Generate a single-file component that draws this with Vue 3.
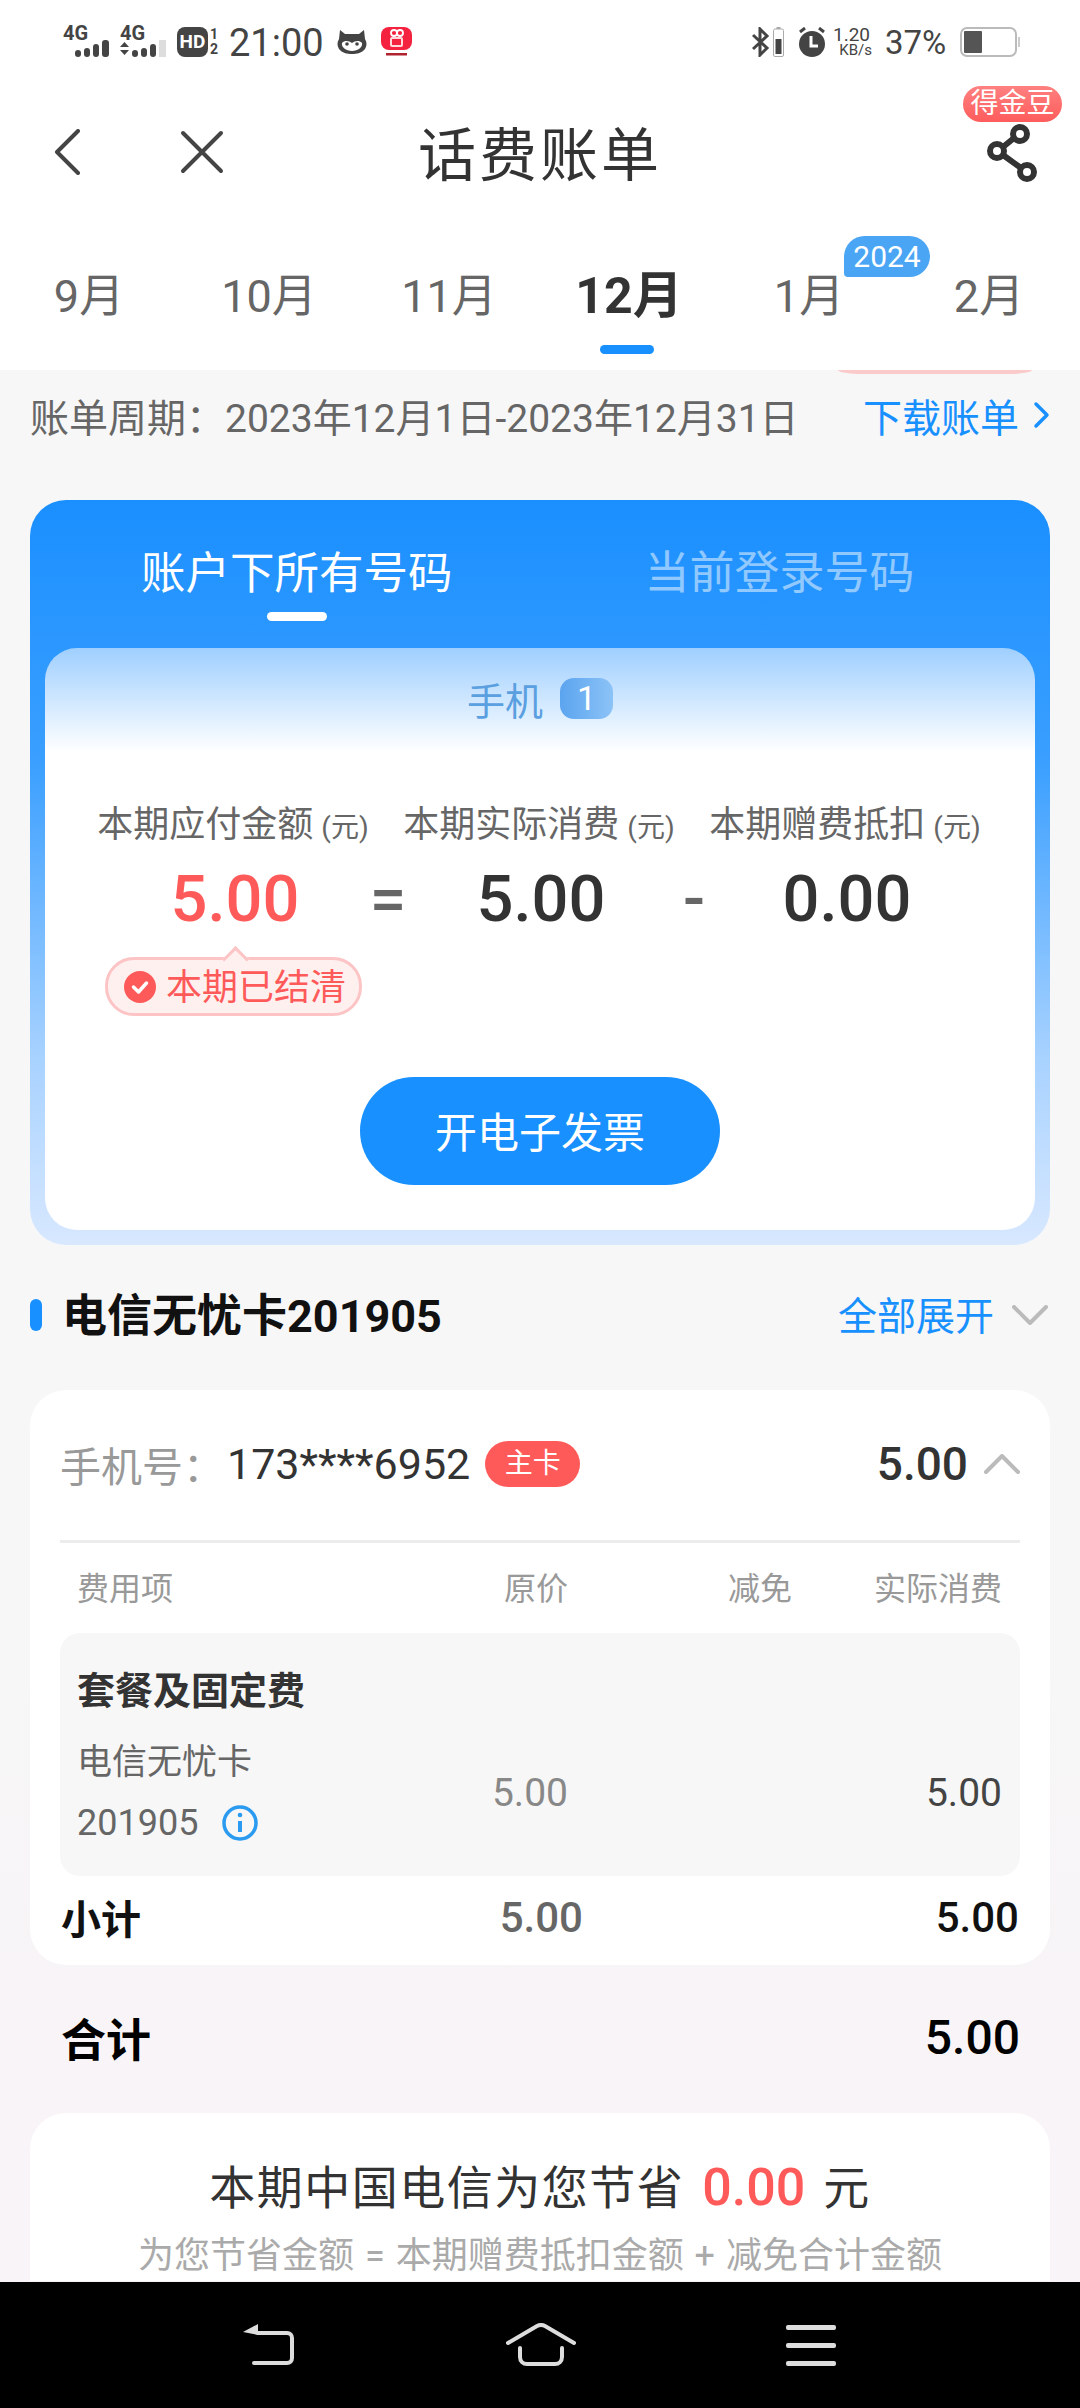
<template>
  <div class="page">
    <header class="top">
      <div class="status">
        <div class="sig">
          <span>4G</span>
          <svg width="47" height="17" viewBox="0 0 47 17" fill="#444"><rect x="12" y="10" width="6" height="7" rx="3" /><rect x="21" y="8" width="6" height="9" rx="3" /><rect x="30" y="4" width="6" height="13" rx="3" /><rect x="39" y="0" width="7" height="17" rx="3" /></svg>
        </div>
        <div class="sig">
          <span>4G</span>
          <svg width="47" height="17" viewBox="0 0 47 17" fill="#444"><path d="M0 7 4.500 2 9 7zM0 10h9l-4.500 5z" /><rect x="12" y="10" width="6" height="7" rx="3" /><rect x="21" y="8" width="6" height="9" rx="3" /><rect x="30" y="4" width="6" height="13" rx="3" /><rect x="39" y="0" width="7" height="17" fill="#ddd" /></svg>
        </div>
        <div class="hd"><b>HD</b><i><em>1</em><em>2</em></i></div>
        <span class="clock">21:00</span>
        <svg class="cat" width="30" height="24" viewBox="0 0 30 24"><path d="M3 0 8 4h14l5-4 1 9c2 3 2 7 0 10-3 4-8 5-13 5S5 23 2 19C0 16 0 12 2 9z" fill="#444" /><path d="M5 13c3-3 7-2 10 0 3-2 7-3 10 0 1 4-4 8-10 8S4 17 5 13z" fill="#fff" /><circle cx="10" cy="14" r="1.800" fill="#444" /><circle cx="20" cy="14" r="1.800" fill="#444" /></svg>
        <svg class="kw" width="31" height="30" viewBox="0 0 31 30"><rect x="0" y="0" width="31" height="23" rx="8" fill="#f5223f" /><circle cx="13" cy="6" r="3" fill="none" stroke="#fff" stroke-width="1.800" /><circle cx="19" cy="6" r="3" fill="none" stroke="#fff" stroke-width="1.800" /><rect x="10" y="11" width="11" height="8" rx="1" fill="none" stroke="#ffd9dc" stroke-width="2" /><rect x="5" y="26" width="21" height="2.500" fill="#b0222e" /></svg>
        <div class="status-right">
          <svg width="18" height="30" viewBox="0 0 18 30" fill="none" stroke="#444" stroke-width="3"><path d="M1 8 15 21 8 28V2l7 7L1 22" /></svg>
          <svg class="mini" width="11" height="30" viewBox="0 0 11 30"><rect x="3.500" y="0" width="4" height="2" fill="#aaa" /><rect x=".5" y="2" width="10" height="27.500" rx="1.500" fill="#fff" stroke="#aaa" /><rect x="2.500" y="12" width="6" height="15" fill="#444" /></svg>
          <svg class="alarm" width="28" height="30" viewBox="0 0 28 30"><circle cx="14" cy="17" r="13" fill="#444" /><path d="M13 9v10h7" fill="none" stroke="#fff" stroke-width="3" /><path d="M2 5 7 1M26 5l-5-4" stroke="#444" stroke-width="3" /></svg>
          <div class="speed"><span>1.20</span><span>KB/s</span></div>
          <span class="pct">37%</span>
          <svg class="batt" width="60" height="30" viewBox="0 0 60 30"><rect x="1" y="1" width="55" height="28" rx="6" fill="#fff" stroke="#bbb" stroke-width="2" /><rect x="4" y="4" width="18" height="22" rx="1" fill="#555" /><rect x="58" y="10" width="2" height="10" fill="#ccc" /></svg>
        </div>
      </div>

      <div class="navbar">
        <svg class="nav-back" width="26" height="46" viewBox="0 0 26 46" fill="none" stroke="#444" stroke-width="4" stroke-linecap="round" stroke-linejoin="round"><path d="M24 2 3 23l21 21" /></svg>
        <svg class="nav-close" width="44" height="44" viewBox="0 0 44 44" fill="none" stroke="#444" stroke-width="4" stroke-linecap="round"><path d="M3 3l38 38M41 3 3 41" /></svg>
        <h1>话费账单</h1>
        <span class="bean">得金豆</span>
        <svg class="share" width="52" height="58" viewBox="0 0 52 58" fill="none" stroke="#333" stroke-width="6"><circle cx="33" cy="10" r="7" /><circle cx="10" cy="27" r="7" /><circle cx="40" cy="48" r="7" /><path d="M27 14 16 23M16 31l18 13" /></svg>
      </div>

      <div class="months">
        <div v-for="m in months" :key="m.label" class="month" :class="{ on: m.active }">
          {{ m.label }}
          <span v-if="m.year" class="year">{{ m.year }}</span>
          <span v-if="m.active" class="bar" />
        </div>
      </div>
    </header>

    <main class="body">
      <span class="peek" />
      <div class="period">
        <span class="period-text">账单周期：2023年12月1日-2023年12月31日</span>
        <span class="dl">下载账单
          <svg width="17" height="30" viewBox="0 0 17 30" fill="none" stroke="#1890ff" stroke-width="3.500" stroke-linecap="round" stroke-linejoin="round"><path d="M3 4 14 15 3 26" /></svg>
        </span>
      </div>

      <section class="blue">
        <div class="tabs">
          <div class="tab on">账户下所有号码<span class="tab-bar" /></div>
          <div class="tab off">当前登录号码</div>
        </div>
        <div class="inner">
          <div class="kind"><span>手机</span><b>1</b></div>
          <div class="labels">
            <span v-for="l in labels" :key="l">{{ l }}<small>(元)</small></span>
          </div>
          <div class="nums">
            <span class="red">5.00</span><i>=</i><span>5.00</span><i>-</i><span>0.00</span>
          </div>
          <div class="paid">
            <svg width="32" height="32" viewBox="0 0 32 32"><circle cx="16" cy="16" r="16" fill="#ff5a5a" /><path d="M9.500 16l5 5 8-9" fill="none" stroke="#fff" stroke-width="3.500" stroke-linecap="round" stroke-linejoin="round" /></svg>
            <span>本期已结清</span>
          </div>
          <button class="invoice" type="button">开电子发票</button>
        </div>
      </section>

      <div class="sec-head">
        <span class="sec-mark" />
        <h2>电信无忧卡201905</h2>
        <span class="expand">全部展开</span>
        <svg width="36" height="20" viewBox="0 0 36 20" fill="none" stroke="#bbb" stroke-width="4" stroke-linecap="round" stroke-linejoin="round"><path d="M2 2l16 16L34 2" /></svg>
      </div>

      <section class="card">
        <div class="phone">
          <span class="ph-label">手机号：</span>
          <span class="ph-num">173****6952</span>
          <span class="main-tag">主卡</span>
          <b class="ph-total">5.00</b>
          <svg width="36" height="20" viewBox="0 0 36 20" fill="none" stroke="#bbb" stroke-width="4" stroke-linecap="round" stroke-linejoin="round"><path d="M2 18 18 2l16 16" /></svg>
        </div>
        <div class="cols">
          <span>费用项</span><span>原价</span><span>减免</span><span>实际消费</span>
        </div>
        <div class="fee">
          <h3>套餐及固定费</h3>
          <div class="fee-row">
            <div class="fee-name">
              <p>电信无忧卡</p>
              <p class="plan-no">201905
                <svg width="36" height="36" viewBox="0 0 36 36" fill="none" stroke="#2a9bf0"><circle cx="18" cy="18" r="16" stroke-width="3.500" /><path d="M18 16v11" stroke-width="4" /><circle cx="18" cy="10" r="2.300" fill="#2a9bf0" stroke="none" /></svg>
              </p>
            </div>
            <span class="orig">5.00</span>
            <span />
            <span class="real">5.00</span>
          </div>
        </div>
        <div class="subtotal">
          <b>小计</b><b class="sub-mid">5.00</b><b class="sub-end">5.00</b>
        </div>
      </section>

      <div class="total"><b>合计</b><span>5.00</span></div>

      <section class="save">
        <p class="save-title">本期中国电信为您节省<em>0.00</em>元</p>
        <p class="save-sub">为您节省金额 = 本期赠费抵扣金额 + 减免合计金额</p>
      </section>
    </main>

    <footer class="sysnav">
      <svg width="52" height="42" viewBox="0 0 52 42" fill="none" stroke="#ddd" stroke-width="4" stroke-linecap="round"><path d="M15 9h29c3 0 5 2 5 5v20c0 3-2 5-5 5H11" /><path d="M0 8 15 0v11z" fill="#ddd" stroke="none" /></svg>
      <svg width="70" height="44" viewBox="0 0 70 44" fill="none" stroke="#ddd" stroke-width="4" stroke-linecap="round"><path d="M2 20 31 3q4-2 8 0L68 20" /><path d="M14 25v9c0 4 3 7 7 7h28c4 0 7-3 7-7v-9" /></svg>
      <div class="menu"><span /><span /><span /></div>
    </footer>
  </div>
</template>

<script setup>
const months = [
  { label: '9月' },
  { label: '10月' },
  { label: '11月' },
  { label: '12月', active: true },
  { label: '1月', year: '2024' },
  { label: '2月' },
]
const labels = ['本期应付金额', '本期实际消费', '本期赠费抵扣']
</script>

<style>
html, body { margin: 0; background: #f7f7f7; }
</style>

<style scoped>
.page {
  width: 1080px;
  height: 2408px;
  display: flex;
  flex-direction: column;
  overflow: hidden;
  font-family: Roboto, "Noto Sans CJK SC", sans-serif;
  color: #333;
}
p, h1, h2, h3 { margin: 0; font-weight: 400; }

.top { background: #fff; flex-shrink: 0; }
.status { height: 84px; display: flex; align-items: center; padding: 0 60px 0 63px; color: #444; }
.sig { width: 47px; margin-right: 10px; display: flex; flex-direction: column; margin-top: -1px; }
.sig span { font: 700 20px/14px Roboto, sans-serif; }
.sig svg { display: block; }
.hd { display: flex; align-items: center; width: 42px; margin-right: 10px; }
.hd b { width: 31px; height: 30px; background: #444; border-radius: 8px; color: #fff; font: 700 19px/30px Roboto, sans-serif; text-align: center; }
.hd i { display: flex; flex-direction: column; font: 700 14px/15px Roboto, sans-serif; margin-left: 2px; }
.hd em { font-style: normal; }
.clock { font-size: 38px; line-height: 40px; width: 95px; margin-top: 2px; }
.cat { margin-left: 13px; }
.kw { margin-left: 14px; }
.status-right { margin-left: auto; display: flex; align-items: center; }
.mini { margin-left: 3px; }
.alarm { margin-left: 14px; }
.speed { width: 38px; margin-left: 8px; display: flex; flex-direction: column; align-items: flex-end; }
.speed span:first-child { font-size: 19px; line-height: 17px; margin-right: 2px; }
.speed span:last-child { font-size: 15px; line-height: 15px; }
.pct { font-size: 33px; line-height: 40px; margin-left: 13px; width: 61px; margin-top: 2px; }
.batt { margin-left: 14px; }

.navbar { height: 138px; position: relative; display: flex; align-items: center; justify-content: center; }
.nav-back { position: absolute; left: 54px; top: 45px; }
.nav-close { position: absolute; left: 180px; top: 46px; }
.navbar h1 { font-size: 58px; line-height: 80px; letter-spacing: 3px; color: #333; margin-top: 6px; }
.bean {
  position: absolute;
  left: 963px;
  top: 2px;
  width: 99px;
  height: 36px;
  border-radius: 18px;
  background: linear-gradient(#ff8080, #ff5c5c);
  color: #fff;
  font-size: 28px;
  line-height: 36px;
  text-align: center;
}
.share { position: absolute; left: 987px; top: 40px; }

.months { height: 148px; display: grid; grid-template-columns: repeat(6, 180px); margin-left: -1px; }
.month { position: relative; display: flex; align-items: center; justify-content: center; font-size: 45px; color: #666; padding-bottom: 7px; box-sizing: border-box; }
.month.on { font-size: 50px; font-weight: 700; color: #333; padding-bottom: 11px; }
.year {
  position: absolute;
  left: 125px;
  top: 14px;
  width: 86px;
  height: 41px;
  border-radius: 21px 21px 21px 4px;
  background: #4aa5f5;
  color: #fff;
  font-size: 30px;
  font-weight: 400;
  line-height: 41px;
  text-align: center;
}
.bar { position: absolute; left: 61px; bottom: 16px; width: 54px; height: 9px; border-radius: 5px; background: #1890ff; }

.body {
  flex: 1;
  min-height: 0;
  overflow: hidden;
  position: relative;
  background: linear-gradient(#f7f7f7 0, #f7f7f7 1300px, #f8f4f7 1650px);
}
.peek { position: absolute; left: 838px; top: 0; width: 194px; height: 4px; border-radius: 0 0 24px 24px / 0 0 4px 4px; background: #fbcaca; }
.period { height: 96px; margin-bottom: 34px; padding: 0 30px 6px; box-sizing: border-box; display: flex; align-items: center; justify-content: space-between; font-size: 39px; }
.period-text { color: #666; }
.dl { color: #1890ff; display: flex; align-items: center; gap: 14px; }

.blue {
  margin: 0 30px;
  padding: 0 15px 15px;
  border-radius: 36px;
  background: linear-gradient(#1a8fff, #3a9fff 35%, #a8d2ff 75%, #d8e8ff);
}
.tabs { height: 148px; display: flex; }
.tab { position: relative; font-size: 44.500px; line-height: 148px; }
.tab.on { color: #fff; margin-left: 96px; }
.tab.off { color: rgba(255, 255, 255, 0.5); margin-left: 192px; font-size: 45px; }
.tab-bar { position: absolute; left: 126px; top: 112px; width: 60px; height: 9px; border-radius: 5px; background: #fff; }

.inner {
  height: 582px;
  box-sizing: border-box;
  border-radius: 32px;
  background: linear-gradient(#9fcfff, #fff 104px);
}
.kind { height: 104px; padding-bottom: 4px; box-sizing: border-box; display: flex; align-items: center; justify-content: center; gap: 17px; color: #5a9fe0; font-size: 38px; }
.kind b { width: 53px; height: 41px; border-radius: 14px; background: linear-gradient(90deg, #5ba4ef, #8cc3f7); color: #fff; font-size: 34px; font-weight: 400; line-height: 41px; text-align: center; }
.labels { margin-top: 48px; height: 50px; padding-left: 35px; display: grid; grid-template-columns: repeat(3, 306px); color: #666; font-size: 36px; line-height: 50px; text-align: center; white-space: nowrap; }
.labels small { font-size: 28px; margin-left: 8px; }
.nums { margin-top: 9px; height: 80px; padding-left: 63px; display: grid; grid-template-columns: 254px 52px 254px 52px 254px; font-size: 65px; font-weight: 500; line-height: 80px; text-align: center; }
.nums i { font-style: normal; color: #666; }
.nums .red { color: #ff5a5a; }
.paid {
  position: relative;
  margin: 18px 0 0 60px;
  width: 257px;
  height: 59px;
  box-sizing: border-box;
  border: 3px solid #fcc4c4;
  border-radius: 29px;
  background: #fff0f0;
  color: #ff5a5a;
  font-size: 36px;
  display: flex;
  align-items: center;
  padding-left: 16px;
  gap: 10px;
}
.paid span { margin-top: -5px; }
.paid::before {
  content: "";
  position: absolute;
  left: 118px;
  top: -10px;
  width: 16px;
  height: 16px;
  border: solid #fcc4c4;
  border-width: 3px 0 0 3px;
  background: #fff0f0;
  transform: rotate(45deg);
}
.invoice { display: block; margin: 61px auto 0; width: 360px; height: 108px; padding-bottom: 4px; border: 0; border-radius: 54px; background: #1890ff; color: #fff; font: inherit; font-size: 42px; }

.sec-head { height: 140px; margin-bottom: 5px; padding: 0 32px 5px 30px; box-sizing: border-box; display: flex; align-items: center; }
.sec-mark { width: 12px; height: 32px; margin-top: 5px; border-radius: 6px; background: #1890ff; margin-right: 20px; }
.sec-head h2 { font-size: 45px; font-weight: 700; color: #111; flex: 1; }
.expand { color: #1890ff; font-size: 39px; margin-right: 18px; }
.sec-head svg { margin-top: 5px; }

.card { margin: 0 30px; height: 575px; box-sizing: border-box; border-radius: 36px; background: #fff; padding: 0 30px; }
.phone { height: 148px; padding-bottom: 2px; display: flex; align-items: center; border-bottom: 3px solid #ececec; box-sizing: content-box; }
.ph-label { color: #999; font-size: 41px; width: 167px; }
.ph-num { font-size: 43px; color: #333; }
.main-tag { margin-left: 15px; width: 95px; height: 46px; border-radius: 23px; background: #ff5a5a; color: #fff; font-size: 28px; line-height: 46px; text-align: center; }
.ph-total { margin-left: auto; margin-right: 16px; font-size: 46px; font-weight: 500; }
.cols { height: 90px; padding: 0 18px 5px 17px; box-sizing: border-box; display: grid; grid-template-columns: 201px 290px 224px 210px; align-items: center; color: #999; font-size: 32px; }
.cols span:not(:first-child) { text-align: right; }
.fee { height: 243px; box-sizing: border-box; padding: 28px 18px 0 17px; border-radius: 20px; background: #f7f7f7; }
.fee h3 { font-size: 38px; font-weight: 700; line-height: 60px; color: #333; }
.fee-row { margin-top: 12px; display: grid; grid-template-columns: 201px 290px 224px 210px; align-items: center; }
.fee-name p { display: flex; align-items: center; gap: 24px; font-size: 35px; line-height: 60px; color: #666; white-space: nowrap; }
.fee-name .plan-no { font-size: 36px; }
.orig, .real { text-align: right; font-size: 39px; }
.orig { color: #888; }
.real { color: #444; }
.subtotal { height: 86px; padding-bottom: 4px; box-sizing: border-box; display: grid; grid-template-columns: 120px 402px 438px; align-items: center; font-size: 40px; color: #111; margin-left: 1px; margin-right: -1px; }
.sub-mid { text-align: right; font-weight: 500; font-size: 42px; color: #666; }
.sub-end { text-align: right; font-weight: 500; font-size: 42px; padding-right: 2px; }

.total { height: 144px; margin-bottom: 4px; padding: 0 60px 0 61px; display: flex; align-items: center; justify-content: space-between; font-size: 45px; color: #000; }
.total span { font-size: 48px; font-weight: 500; }

.save { margin: 0 30px; padding-top: 40px; border-radius: 36px 36px 0 0; background: #fff; text-align: center; }
.save-title { line-height: 70px; font-size: 46px; letter-spacing: 1.500px; color: #333; display: flex; justify-content: center; align-items: center; }
.save-title em { font-style: normal; font-weight: 500; font-size: 52px; letter-spacing: 0; color: #ff5a5a; margin: 0 18px; }
.save-sub { margin-top: 8px; line-height: 50px; font-size: 36px; word-spacing: 2px; color: #aaa; white-space: nowrap; }

.sysnav { height: 126px; flex-shrink: 0; background: #000; position: relative; z-index: 1; display: flex; align-items: center; padding-left: 243px; }
.sysnav svg:nth-child(2) { margin-left: 211px; }
.menu { margin-left: 210px; width: 50px; display: flex; flex-direction: column; gap: 13px; }
.menu span { height: 5px; border-radius: 2px; background: #ddd; }
</style>
